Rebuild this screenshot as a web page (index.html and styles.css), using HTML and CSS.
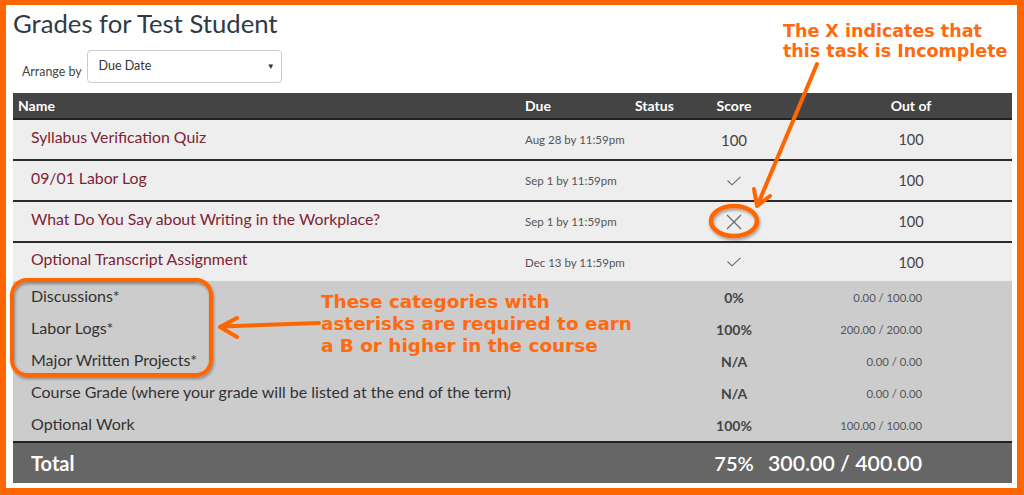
FILE: index.html
```html
<!DOCTYPE html>
<html lang="en">
<head>
<meta charset="utf-8">
<title>Grades for Test Student</title>
<link rel="stylesheet" href="styles.css">
</head>
<body>
<div class="frame">
  <h1 class="title">Grades for Test Student</h1>
  <div class="arrange">
    <span class="arrange-label">Arrange by</span>
    <div class="select"><span>Due Date</span><span class="caret">&#9660;</span></div>
  </div>

  <div class="grades">
    <div class="row head">
      <div class="c-name">Name</div>
      <div class="c-due">Due</div>
      <div class="c-status">Status</div>
      <div class="c-score">Score</div>
      <div class="c-out">Out of</div>
    </div>

    <div class="row item">
      <div class="c-name link">Syllabus Verification Quiz</div>
      <div class="c-due">Aug 28 by 11:59pm</div>
      <div class="c-score num">100</div>
      <div class="c-out num">100</div>
    </div>
    <div class="row item">
      <div class="c-name link">09/01 Labor Log</div>
      <div class="c-due">Sep 1 by 11:59pm</div>
      <div class="c-score"><svg class="ico" width="16" height="10" viewBox="0 0 16 10"><polyline points="1.5,4.5 6,8.8 14.5,0.8" fill="none" stroke="#666" stroke-width="1.1"/></svg></div>
      <div class="c-out num">100</div>
    </div>
    <div class="row item">
      <div class="c-name link">What Do You Say about Writing in the Workplace?</div>
      <div class="c-due">Sep 1 by 11:59pm</div>
      <div class="c-score"><svg class="ico" width="16" height="16" viewBox="0 0 16 16"><path d="M1 1 L15 15 M15 1 L1 15" fill="none" stroke="#666" stroke-width="1.1"/></svg></div>
      <div class="c-out num">100</div>
    </div>
    <div class="row item last">
      <div class="c-name link">Optional Transcript Assignment</div>
      <div class="c-due">Dec 13 by 11:59pm</div>
      <div class="c-score"><svg class="ico" width="16" height="10" viewBox="0 0 16 10"><polyline points="1.5,4.5 6,8.8 14.5,0.8" fill="none" stroke="#666" stroke-width="1.1"/></svg></div>
      <div class="c-out num">100</div>
    </div>

    <div class="summary">
      <div class="row group">
        <div class="c-name">Discussions*</div>
        <div class="c-score pct">0%</div>
        <div class="c-pts">0.00 / 100.00</div>
      </div>
      <div class="row group">
        <div class="c-name">Labor Logs*</div>
        <div class="c-score pct">100%</div>
        <div class="c-pts">200.00 / 200.00</div>
      </div>
      <div class="row group">
        <div class="c-name">Major Written Projects*</div>
        <div class="c-score pct">N/A</div>
        <div class="c-pts">0.00 / 0.00</div>
      </div>
      <div class="row group">
        <div class="c-name">Course Grade (where your grade will be listed at the end of the term)</div>
        <div class="c-score pct">N/A</div>
        <div class="c-pts">0.00 / 0.00</div>
      </div>
      <div class="row group">
        <div class="c-name">Optional Work</div>
        <div class="c-score pct">100%</div>
        <div class="c-pts">100.00 / 100.00</div>
      </div>
    </div>

    <div class="row total">
      <div class="c-name">Total</div>
      <div class="c-score">75%</div>
      <div class="c-pts">300.00 / 400.00</div>
    </div>
  </div>

  <div class="note note-x">The X indicates that<br>this task is Incomplete</div>
  <div class="note note-cat">These categories with<br>asterisks are required to earn<br>a B or higher in the course</div>

  <svg class="overlay" width="1024" height="495" viewBox="0 0 1024 495">
    <defs>
      <filter id="sh" x="-20%" y="-20%" width="140%" height="140%">
        <feDropShadow dx="1" dy="2" stdDeviation="1.5" flood-color="#000" flood-opacity="0.35"/>
      </filter>
    </defs>
    <g fill="none" stroke="#ff6600" stroke-width="4" stroke-linecap="round" stroke-linejoin="round">
      <path d="M817 64 L758 204"/>
      <path d="M754 189 L757 206 L770 196"/>
      <ellipse cx="734" cy="221" rx="23" ry="15" stroke-width="4.5" filter="url(#sh)"/>
      <rect x="12" y="280" width="199" height="95" rx="15" ry="15" filter="url(#sh)"/>
      <path d="M319 323 L222 326.5"/>
      <path d="M237 318 L220 327 L237 337"/>
    </g>
  </svg>
</div>
</body>
</html>
```
FILE: styles.css
```css
* { box-sizing: border-box; }
html, body { margin: 0; padding: 0; background: #fff; }
body { font-family: Lato, "Open Sans", "Liberation Sans", sans-serif; color: #2d3b45; }

.frame {
  position: relative;
  width: 1024px;
  height: 495px;
  border-style: solid;
  border-color: #ff6600;
  border-width: 5px 7px 7px 6px;
  padding: 3px 5px 0 7px;
  overflow: hidden;
}

.title {
  margin: 0;
  font-size: 25.7px;
  line-height: 30px;
  font-weight: 400;
  color: #2d3b45;
}

.arrange {
  display: flex;
  align-items: center;
  gap: 5px;
  margin-top: 12px;
  padding-left: 9px;
  height: 33px;
}
.arrange-label { font-size: 12.4px; color: #444; padding-top: 9px; }
.select {
  width: 195px;
  height: 33px;
  border: 1px solid #ccc;
  border-radius: 4px;
  display: flex;
  align-items: center;
  justify-content: space-between;
  padding: 0 6px 0 11px;
  font-size: 12.5px;
  color: #333;
  padding-bottom: 2px;
}
.caret { font-size: 8px; color: #333; }

.grades { margin-top: 10px; width: 999px; }

.row {
  display: grid;
  grid-template-columns: 507px 110px 60px 88px 82px 102px 50px;
  align-items: center;
}
.c-name { grid-column: 1; padding-left: 18px; white-space: nowrap; }
.c-due { grid-column: 2; padding-left: 5px; white-space: nowrap; }
.c-status { grid-column: 3; padding-left: 5px; }
.c-score { grid-column: 4; text-align: center; white-space: nowrap; }
.c-out { grid-column: 6; text-align: center; }
.c-pts { grid-column: 5 / 7; text-align: right; padding-right: 40px; white-space: nowrap; }

.head {
  height: 27px;
  background: #444;
  border-bottom: 2px solid #222;
  color: #fff;
  font-weight: 700;
  font-size: 14px;
}
.head .c-name { padding-left: 5px; }

.item {
  height: 41px;
  background: #eee;
  border-bottom: 2px solid #2a2a2a;
}
.item.last { border-bottom: 0; height: 38px; }
.item .c-name { font-size: 15.8px; padding-bottom: 7px; }
.link { color: #7d2434; }
.item .c-due { font-size: 11.5px; color: #555; }
.item .num { font-size: 15px; color: #444; }
.item .c-out { font-size: 14.5px; }
.ico { display: block; margin: 0 auto; }

.summary { background: #ccc; }
.group { height: 32px; color: #333; }
.group .c-name { font-size: 16px; padding-bottom: 4px; }
.group .pct { font-size: 14px; font-weight: 700; color: #444; }
.group .c-pts { font-size: 11.3px; color: #555; }

.total {
  height: 42px;
  background: #666;
  border-top: 2px solid #222;
  color: #fff;
  font-size: 20px;
}
.total .c-name { font-weight: 700; }
.total .c-score { font-weight: 600; }
.total .c-pts { font-weight: 600; font-size: 21.3px; margin-left: -30px; }

.note {
  position: absolute;
  font-family: "DejaVu Sans", Verdana, sans-serif;
  font-weight: 700;
  color: #ff6a10;
  white-space: nowrap;
}
.note-x { left: 777px; top: 17px; font-size: 17.5px; line-height: 19.5px; }
.note-cat { left: 315px; top: 286px; font-size: 18.4px; line-height: 22px; }

.overlay { position: absolute; left: -6px; top: -5px; pointer-events: none; }
```
